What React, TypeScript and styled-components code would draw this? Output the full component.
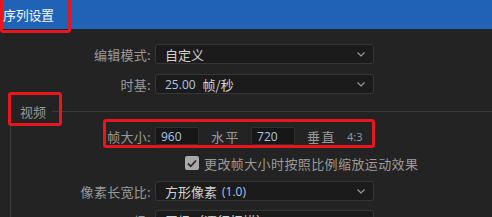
import React from "react";
import styled, { createGlobalStyle } from "styled-components";

const Global = createGlobalStyle`
  html, body { margin: 0; padding: 0; background: #232323; }
  * { box-sizing: border-box; }
`;

const FONT = `"Noto Sans CJK SC", "Noto Sans", sans-serif`;

const Page = styled.div`
  position: relative;
  width: 492px;
  height: 217px;
  overflow: hidden;
  background: #232323;
  font-family: ${FONT};
  color: #9c9c9c;
`;

const Header = styled.div`
  height: 29px;
  background: #1f62b6;
  display: flex;
  align-items: center;
  padding-left: 3px;
  color: #f2f6fb;
  font-size: 13px;
  letter-spacing: -0.3px;
`;

const Content = styled.div`
  padding-top: 15px;
`;

const Row = styled.div<{ $mt?: number }>`
  display: flex;
  align-items: center;
  height: 20px;
  margin-top: ${(p) => p.$mt ?? 0}px;
`;

const Label = styled.div<{ $w: number }>`
  width: ${(p) => p.$w}px;
  padding-right: 4px;
  text-align: right;
  font-size: 13px;
  color: #9a9a9a;
  white-space: nowrap;
  letter-spacing: 0.3px;
`;

const Select = styled.div`
  position: relative;
  width: 219px;
  height: 20px;
  background: #1b1b1b;
  border: 1px solid #363636;
  border-radius: 3px;
  display: flex;
  align-items: center;
  padding-left: 9px;
  font-size: 13px;
  color: #d2d2d2;
  white-space: nowrap;
`;

const Num = styled.span`
  font-size: 12px;
  color: #a9c6ea;
  margin-right: 7px;
  font-family: "Open Sans", "Noto Sans", sans-serif;
`;

const Paren = styled.span`
  font-size: 12px;
  color: #a9c6ea;
  margin-left: 5px;
  font-family: "Open Sans", "Noto Sans", sans-serif;
`;

const Chevron = styled.svg`
  position: absolute;
  right: 8px;
  top: 7px;
`;

const SectionHeader = styled.div`
  display: flex;
  align-items: center;
  height: 14px;
  margin-top: 10px;
  padding-left: 20px;
  font-size: 13px;
  color: #9a9a9a;
`;

const SectionLine = styled.div`
  flex: 1;
  height: 1px;
  margin-left: 6px;
  background: #393939;
`;

const SectionBody = styled.div`
  margin-left: 10px;
  border-left: 1px solid #3a3a3a;
  padding-top: 9px;
  padding-bottom: 40px;
`;

const FrameRow = styled.div`
  display: flex;
  align-items: center;
  height: 18px;
`;

const NumInput = styled.div`
  width: 44px;
  height: 18px;
  background: #171717;
  border: 1px solid #303030;
  border-radius: 2px;
  display: flex;
  align-items: center;
  padding-left: 5px;
  font-size: 12px;
  color: #a9c6ea;
  font-family: "Open Sans", "Noto Sans", sans-serif;
`;

const Word = styled.div<{ $ml: number }>`
  margin-left: ${(p) => p.$ml}px;
  margin-right: 11px;
  font-size: 13px;
  letter-spacing: 1.5px;
  color: #9a9a9a;
`;

const Ratio = styled.div`
  font-size: 11px;
  color: #8b9db3;
  font-family: "Open Sans", "Noto Sans", sans-serif;
`;

const CheckRow = styled.div`
  display: flex;
  align-items: center;
  height: 14px;
  margin-top: 11px;
  padding-left: 174px;
`;

const CheckBox = styled.div`
  width: 14px;
  height: 14px;
  border-radius: 2px;
  background: #a9a9a9;
  display: flex;
  align-items: center;
  justify-content: center;
`;

const CheckText = styled.div`
  margin-left: 5px;
  font-size: 13px;
  letter-spacing: 0.4px;
  color: #9a9a9a;
  white-space: nowrap;
`;

const Annot = styled.div<{ $x: number; $y: number; $w: number; $h: number }>`
  position: absolute;
  left: ${(p) => p.$x}px;
  top: ${(p) => p.$y}px;
  width: ${(p) => p.$w}px;
  height: ${(p) => p.$h}px;
  border: 3px solid #e8161f;
  border-radius: 3px;
  pointer-events: none;
`;

const Chev = () => (
  <Chevron width="8" height="5" viewBox="0 0 8 5">
    <path d="M0.5 0.5 L4 4 L7.5 0.5" fill="none" stroke="#9a9a9a" strokeWidth="1.2" />
  </Chevron>
);

export default function App() {
  return (
    <Page>
      <Global />
      <Header>序列设置</Header>
      <Content>
        <Row>
          <Label $w={155}>编辑模式:</Label>
          <Select>
            自定义
            <Chev />
          </Select>
        </Row>
        <Row $mt={10}>
          <Label $w={155}>时基:</Label>
          <Select>
            <Num>25.00</Num>帧/秒
            <Chev />
          </Select>
        </Row>
        <SectionHeader>
          视频
          <SectionLine />
        </SectionHeader>
        <SectionBody>
          <FrameRow>
            <Label $w={144}>帧大小:</Label>
            <NumInput>960</NumInput>
            <Word $ml={12}>水平</Word>
            <NumInput>720</NumInput>
            <Word $ml={12}>垂直</Word>
            <Ratio>4:3</Ratio>
          </FrameRow>
          <CheckRow>
            <CheckBox>
              <svg width="10" height="9" viewBox="0 0 10 9">
                <path d="M1 4.5 L3.8 7.3 L9 1.5" fill="none" stroke="#2a2a2a" strokeWidth="1.8" />
              </svg>
            </CheckBox>
            <CheckText>更改帧大小时按照比例缩放运动效果</CheckText>
          </CheckRow>
          <Row $mt={11}>
            <Label $w={144}>像素长宽比:</Label>
            <Select>
              方形像素<Paren>(1.0)</Paren>
              <Chev />
            </Select>
          </Row>
          <Row $mt={9}>
            <Label $w={144}>场:</Label>
            <Select>
              无场（逐行扫描）
              <Chev />
            </Select>
          </Row>
        </SectionBody>
      </Content>
      <Annot $x={0} $y={-3} $w={71} $h={36} />
      <Annot $x={8} $y={92} $w={54} $h={34} />
      <Annot $x={103} $y={119} $w={272} $h={29} />
    </Page>
  );
}
